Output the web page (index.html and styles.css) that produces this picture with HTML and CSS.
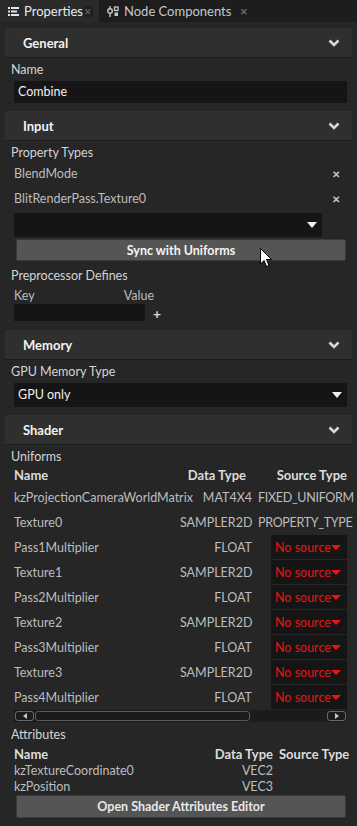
FILE: index.html
```html
<!DOCTYPE html>
<html lang="en">
<head>
    <meta charset="UTF-8">
    <meta name="viewport" content="width=device-width, initial-scale=1.0">
    <title>Properties</title>
    <link rel="stylesheet" href="styles.css">
</head>
<body>
    <div class="tabs">
        <div class="tab active">
            <svg class="tab-icon" width="11" height="9" viewBox="0 0 11 9">
                <rect x="0" y="0" width="2" height="2" fill="#dfe6ee"/>
                <rect x="3" y="0" width="8" height="2" fill="#dfe6ee"/>
                <rect x="0" y="3.5" width="2" height="2" fill="#dfe6ee"/>
                <rect x="3" y="3.5" width="6" height="2" fill="#dfe6ee"/>
                <rect x="0" y="7" width="2" height="2" fill="#dfe6ee"/>
                <rect x="3" y="7" width="8" height="2" fill="#dfe6ee"/>
            </svg>
            <span>Properties</span>
            <span class="tab-close boxed">&#x2715;</span>
        </div>
        <div class="tab">
            <svg class="tab-icon" width="12" height="11" viewBox="0 0 12 11">
                <line x1="3" y1="0" x2="3" y2="11" stroke="#c8c8c8" stroke-width="1.4"/>
                <circle cx="3" cy="5" r="2.3" fill="#1d1d1d" stroke="#c8c8c8" stroke-width="1.4"/>
                <rect x="7.5" y="1" width="3.5" height="3.5" fill="none" stroke="#c8c8c8" stroke-width="1.3"/>
                <rect x="7.5" y="6.5" width="3.5" height="3.5" fill="#c8c8c8"/>
            </svg>
            <span>Node Components</span>
            <span class="tab-close">&#x2715;</span>
        </div>
    </div>

    <div class="panel">
        <div class="section-head">
            <span>General</span>
            <svg class="chevron" width="12" height="8" viewBox="0 0 12 8"><polyline points="1.5,1.5 6,6 10.5,1.5" fill="none" stroke="#d8d8d8" stroke-width="2.6"/></svg>
        </div>
        <div class="section-body">
            <div class="label">Name</div>
            <div class="field">Combine</div>
        </div>

        <div class="section-head">
            <span>Input</span>
            <svg class="chevron" width="12" height="8" viewBox="0 0 12 8"><polyline points="1.5,1.5 6,6 10.5,1.5" fill="none" stroke="#d8d8d8" stroke-width="2.6"/></svg>
        </div>
        <div class="section-body">
            <div class="label">Property Types</div>
            <div class="list-row"><span>BlendMode</span><span class="remove">&#x2715;</span></div>
            <div class="list-row"><span>BlitRenderPass.Texture0</span><span class="remove">&#x2715;</span></div>
            <div class="field select short"><span></span><span class="caret"></span></div>
            <div class="button-wrap">
                <button class="btn">Sync with Uniforms</button>
                <svg class="cursor" width="13" height="20" viewBox="0 0 13 20">
                    <polygon points="0.5,0.5 0.5,16 4,12.5 6.5,18.5 9,17.5 6.5,11.5 11.5,11.5" fill="#fff" stroke="#000" stroke-width="1"/>
                </svg>
            </div>
            <div class="label defines">Preprocessor Defines</div>
            <div class="kv-head"><span>Key</span><span>Value</span></div>
            <div class="kv-row"><div class="field kv"></div><span class="plus">+</span></div>
        </div>

        <div class="section-head">
            <span>Memory</span>
            <svg class="chevron" width="12" height="8" viewBox="0 0 12 8"><polyline points="1.5,1.5 6,6 10.5,1.5" fill="none" stroke="#d8d8d8" stroke-width="2.6"/></svg>
        </div>
        <div class="section-body">
            <div class="label">GPU Memory Type</div>
            <div class="field select"><span>GPU only</span><span class="caret"></span></div>
        </div>

        <div class="section-head">
            <span>Shader</span>
            <svg class="chevron" width="12" height="8" viewBox="0 0 12 8"><polyline points="1.5,1.5 6,6 10.5,1.5" fill="none" stroke="#d8d8d8" stroke-width="2.6"/></svg>
        </div>
        <div class="section-body">
            <div class="label">Uniforms</div>
            <div class="uniforms">
                <div class="th">Name</div><div class="th right dt">Data Type</div><div class="th right">Source Type</div>

                <div class="td">kzProjectionCameraWorldMatrix</div><div class="td right">MAT4X4</div><div class="td src">FIXED_UNIFORM</div>
                <div class="td">Texture0</div><div class="td right">SAMPLER2D</div><div class="td src">PROPERTY_TYPE</div>
                <div class="td">Pass1Multiplier</div><div class="td right">FLOAT</div><div class="td"><div class="nosrc">No source<span class="caret red"></span></div></div>
                <div class="td">Texture1</div><div class="td right">SAMPLER2D</div><div class="td"><div class="nosrc">No source<span class="caret red"></span></div></div>
                <div class="td">Pass2Multiplier</div><div class="td right">FLOAT</div><div class="td"><div class="nosrc">No source<span class="caret red"></span></div></div>
                <div class="td">Texture2</div><div class="td right">SAMPLER2D</div><div class="td"><div class="nosrc">No source<span class="caret red"></span></div></div>
                <div class="td">Pass3Multiplier</div><div class="td right">FLOAT</div><div class="td"><div class="nosrc">No source<span class="caret red"></span></div></div>
                <div class="td">Texture3</div><div class="td right">SAMPLER2D</div><div class="td"><div class="nosrc">No source<span class="caret red"></span></div></div>
                <div class="td">Pass4Multiplier</div><div class="td right">FLOAT</div><div class="td"><div class="nosrc">No source<span class="caret red"></span></div></div>
            </div>
            <div class="hscroll">
                <div class="sb-btn"><span class="arrow left"></span></div>
                <div class="sb-thumb"></div>
                <div class="sb-track"></div>
                <div class="sb-btn"><span class="arrow right"></span></div>
            </div>

            <div class="label attrs">Attributes</div>
            <div class="attributes">
                <div class="th">Name</div><div class="th right">Data Type</div><div class="th right">Source Type</div>
                <div class="ad">kzTextureCoordinate0</div><div class="ad right">VEC2</div><div class="ad"></div>
                <div class="ad">kzPosition</div><div class="ad right">VEC3</div><div class="ad"></div>
            </div>
            <button class="btn wide">Open Shader Attributes Editor</button>
        </div>
    </div>
</body>
</html>
```

FILE: styles.css
```css
:root {
    --bg: #262626;
    --tabs-bg: #1d1d1d;
    --head-bg: #2f2f2f;
    --field-bg: #151515;
    --text: #d4d4d4;
    --muted: #bdbdbd;
    --strong: #f2f2f2;
    --red: #ea1414;
}
body {
    margin: 0;
    background: var(--bg);
    color: var(--text);
    font-family: Lato, 'Open Sans', sans-serif;
    font-size: 12.5px;
    width: 357px;
    overflow: hidden;
}
.tabs {
    display: flex;
    height: 22px;
    background: var(--tabs-bg);
}
.tab {
    display: flex;
    align-items: center;
    padding: 0 6px 0 8px;
    color: #c4c8cc;
    font-size: 13px;
}
.tab.active {
    width: 85px;
    background: #2a2a2a;
    color: #e4ecf4;
}
.tab-icon {
    margin-right: 5px;
    flex: none;
}
.tab-close {
    margin-left: 9px;
    font-size: 9px;
    color: #6c6c6c;
    font-weight: 700;
}
.tab-close.boxed {
    margin-left: auto;
    background: #1f1f1f;
    color: #5c5c5c;
    padding: 0 1px;
}
.panel {
    padding: 6px 5px 0;
}
.section-head {
    display: flex;
    align-items: center;
    justify-content: space-between;
    height: 29px;
    padding: 0 12px 0 18px;
    background: var(--head-bg);
    border-bottom: 1px solid #1d1d1d;
    font-weight: 700;
    font-size: 13px;
    color: var(--strong);
}
.section-body {
    padding: 4px 0 8px 6px;
}
.label {
    height: 16px;
    line-height: 16px;
    color: var(--text);
}
.field {
    margin: 3px 0 0 3px;
    height: 22px;
    line-height: 22px;
    padding: 0 4px;
    width: 325px;
    background: var(--field-bg);
    color: #f0f0f0;
}
.field.select {
    display: flex;
    justify-content: space-between;
    align-items: center;
    height: 24px;
    line-height: 24px;
}
.field.short {
    width: 300px;
    margin-top: 2px;
}
.caret {
    width: 0;
    height: 0;
    border-left: 5.5px solid transparent;
    border-right: 5.5px solid transparent;
    border-top: 6px solid #f0f0f0;
    margin-right: 1px;
}
.caret.red {
    border-top-color: var(--red);
    border-left-width: 5px;
    border-right-width: 5px;
    border-top-width: 5px;
}
.list-row {
    display: flex;
    justify-content: space-between;
    align-items: center;
    height: 25px;
    padding: 0 12px 0 3px;
    color: var(--muted);
}
.remove {
    font-size: 10px;
    font-weight: 700;
    color: #c8c8c8;
}
.button-wrap {
    position: relative;
    margin-top: 2px;
}
.btn {
    display: block;
    margin-left: 5px;
    width: 330px;
    height: 22px;
    background: #555;
    border: 1px solid #3a3a3a;
    border-radius: 2px;
    color: #f4f4f4;
    font-family: inherit;
    font-size: 12.5px;
    font-weight: 700;
    padding: 0;
}
.cursor {
    position: absolute;
    left: 249px;
    top: 9px;
}
.label.defines {
    margin-top: 7px;
}
.kv-head {
    display: flex;
    justify-content: space-between;
    width: 140px;
    margin-top: 4px;
    padding-left: 3px;
    color: var(--muted);
    height: 15px;
    line-height: 15px;
}
.kv-row {
    display: flex;
    align-items: center;
}
.field.kv {
    margin-top: 0;
    width: 123px;
    height: 17px;
}
.plus {
    margin-left: 8px;
    margin-top: 2px;
    font-weight: 700;
    font-size: 14px;
    color: #d8d8d8;
}
.uniforms,
.attributes {
    display: grid;
    grid-template-columns: minmax(0, 1fr) 72px 89px;
    column-gap: 6px;
    margin-left: 3px;
    width: 333px;
}
.th {
    font-weight: 700;
    color: #dcdcdc;
    height: 20px;
    line-height: 20px;
    font-size: 13px;
    white-space: nowrap;
}
.th.dt {
    margin-right: 6px;
}
.right {
    text-align: right;
}
.td {
    height: 25px;
    line-height: 25px;
    color: var(--muted);
    white-space: nowrap;
}
.td.src {
    text-align: right;
    letter-spacing: -0.3px;
}
.nosrc {
    display: flex;
    justify-content: space-between;
    align-items: center;
    margin-left: 13px;
    height: 24px;
    padding: 0 5px 0 4px;
    background: var(--field-bg);
    color: var(--red);
    font-size: 12.5px;
}
.hscroll {
    display: flex;
    align-items: center;
    gap: 1px;
    margin-left: 3px;
    width: 333px;
    height: 12px;
    padding: 0 1px;
    box-sizing: border-box;
    background: #1b1b1b;
}
.sb-btn {
    display: flex;
    align-items: center;
    justify-content: center;
    width: 17px;
    height: 8px;
    border: 1px solid #6a6a6a;
    border-radius: 3px;
}
.sb-thumb {
    width: 213px;
    height: 8px;
    border: 1px solid #5a5a5a;
    border-radius: 3px;
}
.sb-track {
    flex: 1;
}
.arrow {
    width: 0;
    height: 0;
    border-top: 3px solid transparent;
    border-bottom: 3px solid transparent;
}
.arrow.left {
    border-right: 4px solid #c8c8c8;
}
.arrow.right {
    border-left: 4px solid #c8c8c8;
}
.label.attrs {
    margin-top: 5px;
}
.attributes {
    grid-template-columns: minmax(0, 1fr) 72px 68px;
    margin-top: 2px;
}
.attributes .th {
    height: 18px;
    line-height: 18px;
}
.ad {
    height: 16px;
    line-height: 16px;
    color: var(--muted);
}
.btn.wide {
    height: 23px;
    color: #e8e8e8;
}
```
